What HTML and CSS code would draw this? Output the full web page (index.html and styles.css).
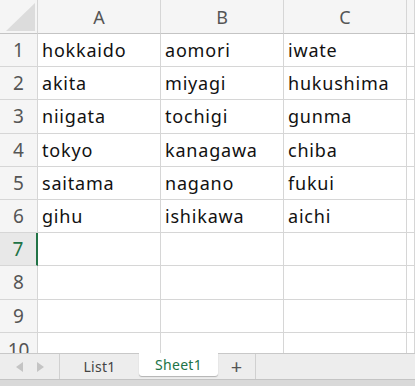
FILE: index.html
```html
<!DOCTYPE html>
<html lang="ja">
<head>
    <meta charset="UTF-8">
    <title>Sheet1</title>
    <link rel="stylesheet" href="styles.css">
</head>
<body>
    <div class="sheet">
        <div class="grid">
            <!-- header row -->
            <div class="corner"><span class="corner-tri"></span></div>
            <div class="col-head">A</div>
            <div class="col-head">B</div>
            <div class="col-head">C</div>
            <div class="col-head"></div>

            <div class="row-head">1</div>
            <div class="cell">hokkaido</div>
            <div class="cell">aomori</div>
            <div class="cell">iwate</div>
            <div class="cell"></div>

            <div class="row-head">2</div>
            <div class="cell">akita</div>
            <div class="cell">miyagi</div>
            <div class="cell">hukushima</div>
            <div class="cell"></div>

            <div class="row-head">3</div>
            <div class="cell">niigata</div>
            <div class="cell">tochigi</div>
            <div class="cell">gunma</div>
            <div class="cell"></div>

            <div class="row-head">4</div>
            <div class="cell">tokyo</div>
            <div class="cell">kanagawa</div>
            <div class="cell">chiba</div>
            <div class="cell"></div>

            <div class="row-head">5</div>
            <div class="cell">saitama</div>
            <div class="cell">nagano</div>
            <div class="cell">fukui</div>
            <div class="cell"></div>

            <div class="row-head">6</div>
            <div class="cell">gihu</div>
            <div class="cell">ishikawa</div>
            <div class="cell">aichi</div>
            <div class="cell"></div>

            <div class="row-head active">7</div>
            <div class="cell"></div>
            <div class="cell"></div>
            <div class="cell"></div>
            <div class="cell"></div>

            <div class="row-head">8</div>
            <div class="cell"></div>
            <div class="cell"></div>
            <div class="cell"></div>
            <div class="cell"></div>

            <div class="row-head">9</div>
            <div class="cell"></div>
            <div class="cell"></div>
            <div class="cell"></div>
            <div class="cell"></div>

            <div class="row-head last">10</div>
            <div class="cell"></div>
            <div class="cell"></div>
            <div class="cell"></div>
            <div class="cell"></div>
        </div>
    </div>

    <div class="tabbar">
        <div class="nav">
            <span class="arrow left"></span>
            <span class="arrow right"></span>
        </div>
        <div class="tab">List1</div>
        <div class="tab current">Sheet1</div>
        <div class="add">+</div>
    </div>
    <div class="statusbar"></div>
</body>
</html>
```

FILE: styles.css
```css
* {
    margin: 0;
    padding: 0;
    box-sizing: border-box;
}
body {
    background: #fff;
    font-family: 'Noto Sans', 'Noto Sans CJK JP', sans-serif;
    color: #111;
    width: 415px;
    height: 386px;
    overflow: hidden;
}
.sheet {
    height: 353px;
    overflow: hidden;
}
.grid {
    display: grid;
    grid-template-columns: 38px 123px 123px 123px 1fr;
    grid-template-rows: 34px;
    grid-auto-rows: 33.2px;
}
.grid > div {
    border-right: 1px solid #d6d6d6;
    border-bottom: 1px solid #d6d6d6;
    display: flex;
    align-items: center;
}
.corner, .col-head, .row-head {
    background: #f5f5f5;
}
.grid > .corner, .grid > .col-head {
    border-bottom-color: #c4c4c4;
}
.corner {
    position: relative;
}
.corner-tri {
    position: absolute;
    right: 2px;
    bottom: 2px;
    width: 0;
    height: 0;
    border-left: 29px solid transparent;
    border-bottom: 28px solid #dcdcdc;
}
.col-head {
    justify-content: center;
    font-size: 18px;
    color: #555;
}
.row-head {
    justify-content: center;
    font-size: 19px;
    color: #555;
}
.grid > .row-head.last {
    align-items: flex-start;
    padding-top: 4px;
}
.grid > .row-head.active {
    background: #e8e8e8;
    color: #217346;
    border-right: 2px solid #217346;
}
.cell {
    padding-left: 4px;
    font-size: 18px;
    letter-spacing: 0.8px;
}
.tabbar {
    height: 26px;
    background: #ededed;
    border-top: 1px solid #c8c8c8;
    display: flex;
    align-items: stretch;
    font-size: 14px;
}
.nav {
    width: 60px;
    border-right: 1px solid #d0d0d0;
    display: flex;
    align-items: center;
    justify-content: center;
    gap: 14px;
}
.arrow {
    width: 0;
    height: 0;
    border-top: 5px solid transparent;
    border-bottom: 5px solid transparent;
}
.arrow.left {
    border-right: 7px solid #c4c4c4;
}
.arrow.right {
    border-left: 7px solid #c4c4c4;
}
.tab {
    width: 79px;
    display: flex;
    align-items: center;
    justify-content: center;
    color: #444;
    letter-spacing: 0.3px;
}
.tab.current {
    background: #fff;
    color: #217346;
    margin-top: -1px;
    margin-bottom: 3px;
    border-radius: 0 0 3px 3px;
    box-shadow: 0 1px 1px rgba(0, 0, 0, 0.25);
}
.add {
    width: 38px;
    border-right: 1px solid #d0d0d0;
    display: flex;
    align-items: center;
    justify-content: center;
    font-size: 20px;
    color: #555;
}
.statusbar {
    height: 7px;
    background: #d9d9d9;
    border-top: 1px solid #c4c4c4;
}
```
